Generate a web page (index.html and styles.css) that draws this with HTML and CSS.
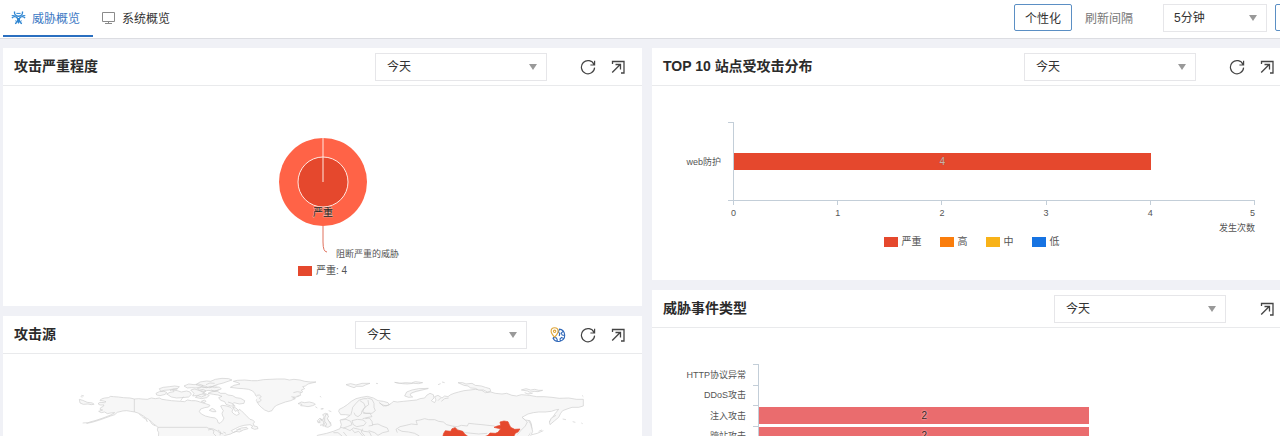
FILE: index.html
```html
<!DOCTYPE html>
<html lang="zh-CN">
<head>
<meta charset="utf-8">
<title>威胁概览</title>
<link rel="stylesheet" href="styles.css">
</head>
<body>
<svg class="sprite" width="0" height="0" aria-hidden="true">
  <symbol id="i-refresh" viewBox="0 0 16 16"><path d="M14 5.400A6.600 6.600 0 1 0 14.600 8.600M14.600 1.800v4.200h-4.200" fill="none" stroke="currentColor" stroke-width="1.200"/></symbol>
  <symbol id="i-expand" viewBox="0 0 16 16"><path d="M2.500 5V2.500h11.500v11.500H11M2.200 13.500l8-8M5.500 5.500h5v5" fill="none" stroke="currentColor" stroke-width="1.300"/></symbol>
  <symbol id="i-globe" viewBox="0 0 16 16"><g fill="none" stroke-width="1.100"><path d="M9 2.100A6.200 6.200 0 1 1 2.800 10.800M9.400 2.400l-1 2.600 1.400 1.600-.6 2.400M3 10.500l3.200.2 1 1.800-.2 2.200M13.400 4.200l-2.200 2 1 1.800 2.600.4M13.600 11.600l-2-1.200-1.600 1.600.4 2.600" stroke="#2f67b8"/><path d="M4.600 10.200C2.400 7.800 1.100 6.200 1.100 4.300a3.500 3.500 0 0 1 7 0C8.100 6.200 6.800 7.800 4.600 10.200z" stroke="#dfa63a"/><circle cx="4.600" cy="4.300" r="1.200" stroke="#dfa63a"/></g></symbol>
</svg>
<div class="app">
  <header class="topbar">
    <nav class="tabs">
      <a class="tab tab-active" href="#threat">
        <svg class="tab-icon" viewBox="0 0 15 15" aria-hidden="true"><g fill="none" stroke="currentColor" stroke-width="1.400"><path d="M3.600 1.500C2.800 4.200 4.800 6.300 7.500 6.300S12.200 4.200 11.400 1.500"/><path d="M1 8.200c1.300-2 4-2.100 5.300-.2 1.200 2 .2 4.900-2.300 5.500"/><path d="M14 8.200c-1.300-2-4-2.100-5.300-.2-1.200 2-.2 4.900 2.300 5.500"/><path d="M.7 5.600h3M11.300 5.600h3M5.400 3.400h4.200M7.500 8v5.500M4.300 10.800l2 .8M10.700 10.800l-2 .8" stroke-width="1"/></g></svg>
        威胁概览
      </a>
      <a class="tab" href="#system">
        <svg class="tab-icon" viewBox="0 0 15 15" aria-hidden="true"><path d="M1.500 2.500h12v9H1.500zM7.500 11.500v2M4 13.500h7" fill="none" stroke="#8b8b8b"/></svg>
        系统概览
      </a>
    </nav>
    <div class="actions">
      <button class="btn" type="button">个性化</button>
      <label class="interval" for="interval">刷新间隔</label>
      <span class="select select-short"><select id="interval"><option>5分钟</option></select></span>
      <button class="btn btn-next" type="button" aria-label="更多"></button>
    </div>
  </header>

  <main class="dashboard">
    <div class="column">
      <section class="panel">
        <div class="panel-head">
          <h2>攻击严重程度</h2>
          <span class="select"><select aria-label="攻击严重程度时间范围"><option>今天</option></select></span>
          <div class="tools">
            <button type="button" aria-label="刷新"><svg><use href="#i-refresh"/></svg></button>
            <button type="button" aria-label="展开"><svg><use href="#i-expand"/></svg></button>
          </div>
        </div>
        <div class="pie">
          <svg class="pie-chart" viewBox="0 0 180 126" role="img" aria-label="严重: 4">
            <circle cx="90" cy="44" r="44" fill="#ff6347"/>
            <circle cx="90" cy="44" r="25" fill="#e5482d" stroke="#ffe9e2" stroke-width="1"/>
            <path d="M90 0v44" stroke="#ffe9e2" stroke-width="1"/>
            <path d="M90 88v16q0 10 4 10" fill="none" stroke="#e0705c"/>
            <text class="slice-label" x="90" y="78" text-anchor="middle">严重</text>
            <text class="callout" x="103" y="119">阻断严重的威胁</text>
          </svg>
          <div class="key"><i class="swatch critical"></i>严重: 4</div>
        </div>
      </section>

      <section class="panel panel-grow">
        <div class="panel-head panel-head-tight">
          <h2>攻击源</h2>
          <span class="select"><select aria-label="攻击源时间范围"><option>今天</option></select></span>
          <div class="tools">
            <button type="button" aria-label="地图"><svg><use href="#i-globe"/></svg></button>
            <button type="button" aria-label="刷新"><svg><use href="#i-refresh"/></svg></button>
            <button type="button" aria-label="展开"><svg><use href="#i-expand"/></svg></button>
          </div>
        </div>
        <svg class="map" viewBox="3 354 639 200" preserveAspectRatio="xMidYMin meet" role="img" aria-label="世界地图">
          <g class="land" transform="translate(70 370) scale(.33333)">
            <path d="M193 87L180 84 160 83 145 81 130 80 122 79 115 83 104 84 94 87 90 91 100 93 108 95 104 98 90 97 84 101 90 105 102 105 100 109 92 113 90 118 98 120 86 124 94 128 104 126 112 131 122 129 134 128 124 134 112 139 96 145 78 151 60 156 50 160 66 157 86 151 106 144 122 138 134 134 142 127 150 125 158 123 170 122 182 124 194 126 204 129 212 133 220 138 228 144 236 148 242 154 250 161 258 167 264 172 262 180 266 188 264 230 420 230 424 212 440 200 452 204 466 196 482 192 496 184 508 186 520 180 534 176 530 172 514 174 504 178 500 184 490 188 484 182 496 176 508 170 522 166 540 164 548 168 544 174 554 178 564 176 562 170 552 168 550 160 554 156 548 150 540 148 534 142 528 136 522 130 514 122 508 118 504 124 508 132 500 136 492 132 486 126 488 118 482 112 470 108 458 106 452 108 456 116 460 122 456 130 458 138 462 144 458 152 450 160 444 158 442 150 436 144 422 142 406 138 394 132 388 125 392 117 404 113 416 111 420 106 410 102 396 98 384 94 376 92 364 92 352 90 344 95 332 94 318 93 304 92 290 90 276 88 268 84 256 86 244 84 232 88 216 87 206 86z"/>
            <path d="M193 87v39M264 172h146l6 3 14 2 12 6 8 6 10 3M414 180l10-2 8 4-2 8 8 8M444 180l8 6-2 10M460 186l8 4"/>
            <path d="M28 88l10 3 14 6 16 2 4 4-8 1-10-2-14 1-10-4zM34 76l8 2M32 80l6 1M38 159l14-1M208 132l6 6 10 8M222 142l10 10M238 150l8 12 10 6M228 148l4 8"/>
            <path d="M258 70l10-5 14-1 8 3-4 6-16 4-10-2zM268 56l12-4 18-2 16-2 14 2-4 5-14 2-14 3-14 1-10 3zM290 72l10-5 12-2-4-5 14 2 12 4 16-3 10 3 4 7-8 8-20 2-16 1-16-3zM342 48l14-6 16 2 14-2 12 4-6 5-14 3-14-1-12 1zM362 60l12-3 12 4 14-3 8 5-10 7 10 5-14 6-12-5-14 2 4-8zM378 44l12-8 20-3 12 1 14-6 20-3 20 1 10 4-12 4-14 5-20 5-14 7-18 2-12-4zM382 56l12-4 16 1 12-4 12 4 14-2 6 6-12 4-14 2-14-2-12 3-14-2zM376 82l12-8 18-3 12 5-8 7-16 3zM414 70l12-5 16-1 10 6 14 0 8 5 14 2 10 6 14 2 12 7-2 8-14 2-16-4-6 5 8 6-12-1-14-5-4-8-12-4-6-8 10-4-12-4-14-2zM394 94l10-4 4 4-6 4zM408 44l12-5 14 1M418 54l12-6 12 0M396 46l16 4M340 80l-8 12M300 62l10-4 12 0M424 60l10 4 12-4M392 64l12 4"/>
            <path d="M418 121l8-6 8 4 4 6-10 0zM488 112l10 2 6 6-8 4zM474 96l12 4 10 8M498 180l12-2 4 4"/>
            <path d="M481 52L492 46 510 42 504 38 490 34 502 31 524 30 544 32 562 32 580 29 600 28 622 27 644 27 658 30 672 28 690 30 704 34 722 36 738 36 726 39 714 42 706 48 698 50 704 56 694 60 698 66 690 70 692 76 680 79 668 84 676 86 662 92 646 96 630 102 620 106 612 112 606 122 596 125 584 120 574 112 566 104 562 96 558 90 566 84 558 78 554 70 548 63 536 58 520 56 504 55z"/>
            <path d="M560 76l8-1 6 5-6 4 6 6-6 6-8 0M670 68l12-3 12 2M664 80l12 2 12-4M684 101l10-5 10 2 14-2 12 3 6 4-8 4-14 3-12-2-10-1 4-4z"/>
            <path d="M750 78l3 4M754 117l6-1M776 122l8 3M746 156l6-8 8 0 2-8-4-6 8-4 8 2-4 8 4 10 8 8 0 6-14 4-10 0 6-6-4-6zM742 152l8-8 6 6-4 8-8 0z"/>
          </g>
          <g class="land" transform="translate(320 370) scale(.33333)">
            <path d="M160 84L174 92 190 94 204 98 208 104 198 108 186 104 178 98 190 108 204 106 214 100 220 94 232 96 250 94 270 92 290 90 300 86 314 84 320 76 330 70 340 74 342 84 334 92 344 98 348 90 344 80 354 76 366 84 374 78 384 80 392 74 402 70 416 66 432 62 450 60 466 58 484 60 496 68 512 66 526 70 546 72 560 70 576 76 590 78 604 74 628 76 650 80 672 80 696 82 718 85 746 84 770 88 790 88 790 108 776 112 756 112 744 116 728 122 722 130 716 142 704 152 690 164 688 156 698 142 706 130 716 118 706 120 694 124 676 126 656 126 640 128 624 132 606 142 616 150 630 152 634 162 636 176 630 192 616 210 600 230H-20L-8 196 20 190 40 184 60 176 64 164 60 150 76 146 90 136 76 134 62 134 56 124 58 118 70 112 82 104 94 94 108 86 124 82 142 79z"/>
            <path d="M254 78l6-12 16-6 20-4 30-1M254 78l12 4 12-1-8-6 4-6 14-5 18-4 18-4M354 92l8-8M364 94l10-8 12-2"/>
            <path d="M414 38l14 0 10 4 18-2 10 6 18 2 12 4 14 4 2 8-10 2-12-6-14 0-10-5-14-1-8-6-12-2zM604 60l14-4 14 4 12-2 12 3 12 0-14 4-12-1-12 3-8-4zM614 68l10 4 14-2M78 44l14-3 16 4 18-5 24 0-14 5-8 4-18 0-8 4-12-4zM224 37l14 3 18-2 18 1 12-4 22 3-12 3-16-1-18 2-14-1zM354 44l8-3M366 36l8 2M168 40l6 1"/>
            <path d="M92 136l4-14 2-10 10-12 10-10 14-4 10 0M120 92l12 8 4 12-10 10-2 10-10 8-8-4-4-8M142 84l14 4 6 12 0 12 4 10-10 8-18 0-10-4 4-12 14-10-2-14M130 130l20 0 6 10-12 2-16 4M64 150l14-2 14 6 4 10-14 6-12 4M96 152l16-4 18 2 8 8-6 8-22 4-10-6zM136 146l12-2 8 10 2 12-12 2M158 164l16-2 12 6 16 6 4 10-18 4-14 8-10-8-18-6M62 172l16 4 12 6 10-8 18 4 14 6 16 2 6 12M70 186l10 12M96 178l8 10 12-4 12 14M128 176l-4 10 12 14M40 188l14 0 12 10"/>
            <path d="M232 188L228 178 240 170 258 166 274 162 292 164 288 152 300 150 314 146 326 149 344 149 356 154 370 156 380 164 396 168 412 170 424 166 442 168 446 160 464 162 486 164 504 166 524 168M234 178l12 6 20 2 18 4 14 8M400 170l16 10 20 8 40 4 26-2M606 142l16 14-6 12-14 14-10 12M626 152l6 10 6 22-6 14M636 194l16-4 18-8M656 184l10-4M688 156l6-12 14-8"/>
            <path d="M18 132l8 6-4 8 6 10 6 10-10 6-8-2 4-8-6-8 0-10zM2 150l10 4-2 10-10 2M2 117l8-1M-14 110l6 4M728 147l10 2M758 155l8 2M784 159l4 2M786 76l4 4"/>
            <path class="hot" d="M371 190L376 182 392 184 396 176 406 173 412 180 428 184 434 192 450 204 480 206 504 196 510 189 526 190 534 187 542 176 530 174 522 172 532 168 542 166 540 156 552 153 564 155 568 164 572 172 584 178 600 177 594 186 586 190 578 206 560 230H360z"/>
          </g>
        </svg>
      </section>
    </div>

    <div class="column">
      <section class="panel">
        <div class="panel-head">
          <h2>TOP 10 站点受攻击分布</h2>
          <span class="select"><select aria-label="站点受攻击分布时间范围"><option>今天</option></select></span>
          <div class="tools">
            <button type="button" aria-label="刷新"><svg><use href="#i-refresh"/></svg></button>
            <button type="button" aria-label="展开"><svg><use href="#i-expand"/></svg></button>
          </div>
        </div>
        <div class="sites">
          <div class="sites-plot">
            <span class="category">web防护</span>
            <div class="notches"><i></i><i></i></div>
            <div class="track"><div class="bar critical" style="width:80%"><span>4</span></div></div>
          </div>
          <div class="axis">
            <div class="ticks"><i></i><i></i><i></i><i></i><i></i></div>
            <div class="numbers"><span>0</span><span>1</span><span>2</span><span>3</span><span>4</span><span>5</span></div>
            <div class="unit">发生次数</div>
          </div>
          <div class="legend">
            <div class="key"><i class="swatch critical"></i>严重</div>
            <div class="key"><i class="swatch high"></i>高</div>
            <div class="key"><i class="swatch medium"></i>中</div>
            <div class="key"><i class="swatch low"></i>低</div>
          </div>
        </div>
      </section>

      <section class="panel panel-grow">
        <div class="panel-head">
          <h2>威胁事件类型</h2>
          <span class="select"><select aria-label="威胁事件类型时间范围"><option>今天</option></select></span>
          <div class="tools">
            <button type="button" aria-label="展开"><svg><use href="#i-expand"/></svg></button>
          </div>
        </div>
        <div class="events">
          <div class="event"><span class="category">HTTP协议异常</span><i class="notch"></i><div class="track"></div></div>
          <div class="event"><span class="category">DDoS攻击</span><i class="notch"></i><div class="track"></div></div>
          <div class="event"><span class="category">注入攻击</span><i class="notch"></i><div class="track"><div class="bar event-bar" style="width:66.6%"><span>2</span></div></div></div>
          <div class="event"><span class="category">跨站攻击</span><i class="notch"></i><div class="track"><div class="bar event-bar" style="width:66.6%"><span>2</span></div></div></div>
        </div>
      </section>
    </div>
  </main>
</div>
</body>
</html>
```
FILE: styles.css
```css
* { box-sizing: border-box; }

body {
  margin: 0;
  height: 100vh;
  overflow: hidden;
  background: #f0f1f6;
  color: #333;
  font-family: "Liberation Sans", "Noto Sans CJK SC", sans-serif;
  font-size: 12px;
}

button, select { font: inherit; color: inherit; }

.sprite { display: block; }

/* The dashboard runs slightly wider than the window. */
.app {
  display: flex;
  flex-direction: column;
  height: 100%;
  margin-right: -11px;
}

.topbar {
  display: flex;
  flex: none;
  justify-content: space-between;
  height: 39px;
  padding-left: 3px;
  background: #fff;
  border-bottom: 1px solid #dcdde2;
}

.tabs { display: flex; }

.tab {
  display: flex;
  align-items: center;
  gap: 6px;
  height: 37px;
  padding: 0 13px 3px 8px;
  color: #333;
  font-size: 12px;
  text-decoration: none;
}

.tab-active {
  padding-bottom: 1px;
  color: #3b78c4;
  border-bottom: 2px solid #2a6fc0;
}

.tab-icon { width: 15px; height: 15px; }
.tab-active .tab-icon { color: #2f86d2; }

.actions {
  display: flex;
  align-items: center;
  margin-right: -42px;
  padding-bottom: 3px;
}

.btn {
  width: 58px;
  height: 27px;
  padding: 0;
  background: #fff;
  border: 1px solid #5b8fc4;
  border-radius: 2px;
}

.btn-next { margin-left: 8px; }

.interval { margin: 0 30px 0 13px; color: #777; }

.select { display: grid; width: 172px; align-items: center; }
.select-short { width: 104px; }

.select select {
  grid-area: 1 / 1;
  width: 100%;
  height: 28px;
  padding: 0 24px 0 11px;
  appearance: none;
  background: #fff;
  border: 1px solid #e6e6e9;
  border-radius: 0;
}

.select-short select { padding-left: 10px; }

.select::after {
  content: "";
  grid-area: 1 / 1;
  justify-self: end;
  margin-right: 10px;
  border: 4px solid transparent;
  border-top: 6px solid #999;
  border-bottom: 0;
  pointer-events: none;
}

.dashboard {
  display: grid;
  flex: 1;
  grid-template-columns: 1fr 1fr;
  gap: 10px;
  min-height: 0;
  padding: 9px 0 0 3px;
}

.column {
  display: flex;
  flex-direction: column;
  gap: 10px;
  min-width: 0;
  min-height: 0;
}

.panel { flex: none; background: #fff; }
.panel-grow { flex: 1; min-height: 0; overflow: hidden; }

.panel-head {
  display: flex;
  align-items: center;
  height: 38px;
  padding: 0 9px 0 11px;
  border-bottom: 1px solid #e9eaec;
}

.panel-head h2 {
  flex: 1;
  margin: 0;
  padding-bottom: 2px;
  font-size: 14px;
  line-height: 20px;
  color: #2b2b2b;
}

.tools { display: flex; margin-left: 26px; }
.panel-head-tight .tools { margin-left: 16px; }

.tools button {
  display: grid;
  place-items: center;
  width: 30px;
  height: 28px;
  padding: 0;
  color: #444;
  background: none;
  border: 0;
}

.tools svg { width: 16px; height: 16px; }

.key {
  display: flex;
  align-items: center;
  gap: 4px;
  color: #555;
  font-size: 10px;
  line-height: 14px;
}

.swatch { width: 14px; height: 10px; }
.critical { background: #e5482d; }
.high { background: #fa7d0c; }
.medium { background: #f8b218; }
.low { background: #1673e2; }

.pie {
  display: flex;
  flex-direction: column;
  align-items: center;
  padding: 52px 0 28px;
}

.pie-chart { width: 180px; height: 126px; overflow: visible; }

.slice-label {
  fill: #222;
  stroke: #f7a594;
  stroke-width: 1px;
  paint-order: stroke;
  font-size: 10px;
}

.callout { fill: #555; font-size: 9px; }

.map { display: block; width: 100%; }
.land { fill: #f7f7f7; stroke: #cdcdcd; stroke-width: 2; stroke-linejoin: round; }
.hot { fill: #e5482d; stroke: #e5482d; }

.category {
  padding-right: 7px;
  color: #555;
  font-size: 9px;
  text-align: right;
  white-space: nowrap;
}

.sites { padding: 36px 0 31px; }

.sites-plot {
  display: grid;
  grid-template-columns: 76px 5px 1fr;
  align-items: center;
  height: 79px;
  margin-right: 36px;
}

.notches {
  display: flex;
  flex-direction: column;
  justify-content: space-between;
  height: 100%;
}

.notches i, .notch { height: 1px; background: #c3ced8; }

.track {
  display: flex;
  align-items: center;
  height: 100%;
  border-left: 1px solid #c3ced8;
}

.bar {
  display: grid;
  place-items: center;
  height: 17px;
  color: #c9b3ab;
  font-size: 10px;
  line-height: 17px;
}

.bar span { text-shadow: 0 0 1px #8f5145; }

.axis { margin: -1px 36px 0 81px; }

.ticks { display: flex; height: 5px; border-top: 1px solid #c3ced8; }
.ticks i { flex: 1; border-left: 1px solid #c3ced8; }
.ticks i:last-child { border-right: 1px solid #c3ced8; }

.numbers {
  display: flex;
  justify-content: space-between;
  color: #555;
  font-size: 9px;
  line-height: 16px;
}

.numbers span { display: flex; justify-content: center; width: 1px; }
.numbers span:last-child { justify-content: flex-end; }

.unit {
  color: #555;
  font-size: 9px;
  line-height: 14px;
  text-align: right;
}

.legend { display: flex; justify-content: center; gap: 18px; }

.events {
  display: flex;
  flex-direction: column;
  height: 118px;
  padding: 36px 36px 0 0;
}

.event {
  display: grid;
  flex: 1;
  grid-template-columns: 101px 5px 1fr;
  align-items: center;
  min-height: 0;
}

.notch { align-self: start; }

.event-bar { color: #3c1d1d; background: #ea6c6e; }
.event-bar span { text-shadow: 0 0 2px #fff; }
```
